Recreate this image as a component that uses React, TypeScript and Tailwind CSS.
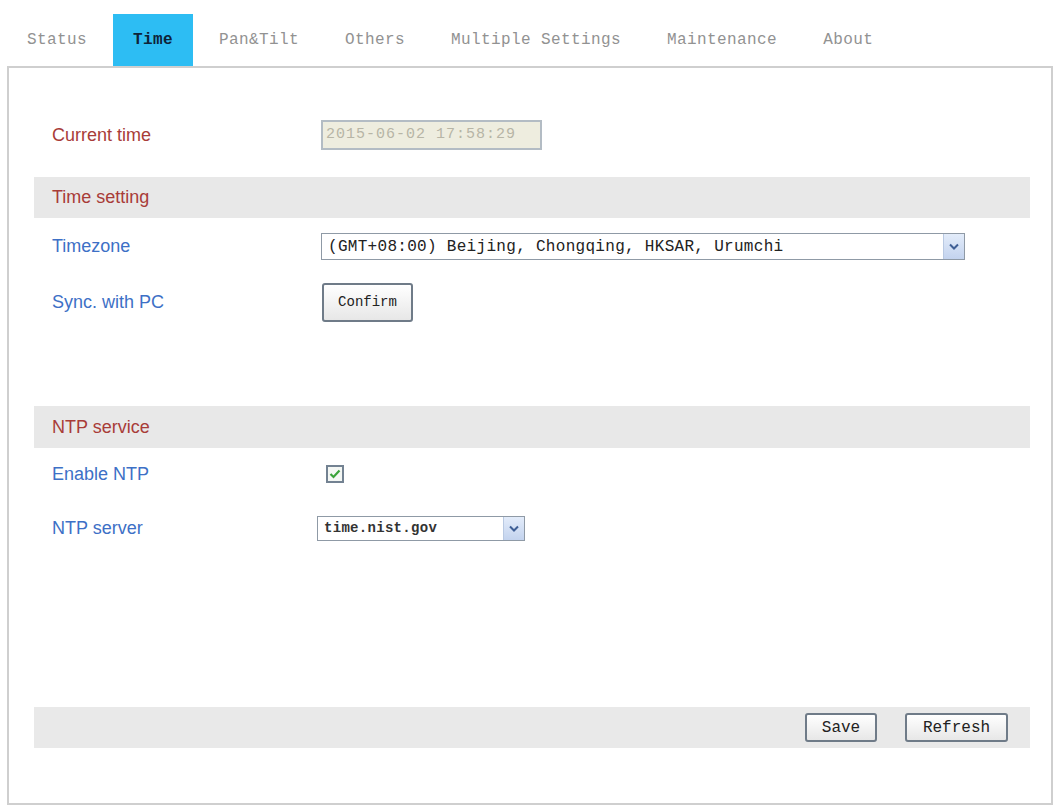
import { useState } from "react";

const TABS = ["Status", "Time", "Pan&Tilt", "Others", "Multiple Settings", "Maintenance", "About"];

function Arrow() {
  return (
    <span className="flex h-full w-[21px] items-center justify-center border-l border-[#b9c9e2] bg-linear-to-b from-[#e3ecfa] to-[#c3d3ee]">
      <svg width="10" height="7" viewBox="0 0 10 7">
        <path d="M1 1.5 L5 5.5 L9 1.5" fill="none" stroke="#3f5f95" strokeWidth="2" />
      </svg>
    </span>
  );
}

function Row({ label, children, h }: { label: string; children: React.ReactNode; h: string }) {
  return (
    <div className={`flex items-center ${h}`}>
      <div className="w-[287px] pl-[18px] text-[18px] text-[#3d70c6]">{label}</div>
      {children}
    </div>
  );
}

export default function App() {
  const [ntp, setNtp] = useState(true);

  return (
    <div className="h-[807px] w-[1056px] bg-white font-['Liberation_Sans',Arial,sans-serif]">
      {/* tabs */}
      <div className="flex h-[66px] items-end gap-[6px] pl-[7px] font-['Liberation_Mono',monospace] text-[16px] tracking-[0.4px]">
        {TABS.map((t) =>
          t === "Time" ? (
            <div key={t} className="flex h-[52px] items-center bg-[#2dbdf3] px-5 font-bold text-[#0e2338]">
              {t}
            </div>
          ) : (
            <div key={t} className="flex h-[52px] items-center px-5 text-[#929292]">
              {t}
            </div>
          )
        )}
      </div>

      <div className="mr-[3px] ml-[7px] border-2 border-[#cfcfcf] pt-[52px] pb-[55px]">
        <div className="mr-[21px] ml-[25px]">
          <div className="flex h-[30px] items-center">
            <div className="w-[287px] pl-[18px] text-[18px] text-[#a83c38]">Current time</div>
            <div className="flex h-[30px] w-[221px] items-center border-2 border-[#b3bcc4] bg-[#eeeddf] pl-[3px] font-['Liberation_Mono',monospace] text-[15px] tracking-[1px] text-[#b7b5a6]">
              2015-06-02 17:58:29
            </div>
          </div>

          <div className="mt-[27px] flex h-[41px] items-center bg-[#e8e8e8] pl-[18px] text-[18px] text-[#a83c38]">
            Time setting
          </div>

          <div className="mt-[15px]">
            <Row label="Timezone" h="h-[27px]">
              <div className="flex h-[27px] w-[644px] items-center justify-between border border-[#8f9aa6] bg-white font-['Liberation_Mono',monospace] text-[16px] tracking-[0.3px] text-[#222]">
                <span className="pl-[6px]">(GMT+08:00) Beijing, Chongqing, HKSAR, Urumchi</span>
                <Arrow />
              </div>
            </Row>
          </div>

          <div className="mt-[22px]">
            <Row label="Sync. with PC" h="h-[40px]">
              <button className="ml-[1px] h-[39px] w-[91px] rounded-[3px] border-2 border-[#6f7b88] bg-linear-to-b from-white to-[#e7e7e7] font-['Liberation_Mono',monospace] text-[14px] text-[#222]">
                Confirm
              </button>
            </Row>
          </div>

          <div className="mt-[84px] flex h-[42px] items-center bg-[#e8e8e8] pl-[18px] text-[18px] text-[#a83c38]">
            NTP service
          </div>

          <div className="mt-[14px]">
            <Row label="Enable NTP" h="h-[24px]">
              <button
                onClick={() => setNtp(!ntp)}
                className="ml-[5px] flex h-[18px] w-[18px] items-center justify-center border-2 border-[#738292] bg-[#f4f7f4]"
              >
                {ntp && (
                  <svg width="12" height="10" viewBox="0 0 12 10">
                    <path d="M1.5 5 L4.5 8 L10.5 1.5" fill="none" stroke="#3aa33a" strokeWidth="2.2" />
                  </svg>
                )}
              </button>
            </Row>
          </div>

          <div className="mt-[30px]">
            <Row label="NTP server" h="h-[25px]">
              <div className="-ml-[4px] flex h-[25px] w-[208px] items-center justify-between border border-[#8f9aa6] bg-white font-['Liberation_Mono',monospace] text-[14px] font-bold tracking-[0.3px] text-[#333]">
                <span className="pl-[6px]">time.nist.gov</span>
                <Arrow />
              </div>
            </Row>
          </div>

          <div className="mt-[166px] flex h-[41px] items-center justify-end gap-[28px] bg-[#e9e9e9] pr-[22px] font-['Liberation_Mono',monospace] text-[16px] text-[#222]">
            <button className="h-[29px] w-[72px] rounded-[3px] border-2 border-[#6f7b88] bg-linear-to-b from-white to-[#e7e7e7]">
              Save
            </button>
            <button className="h-[29px] w-[103px] rounded-[3px] border-2 border-[#6f7b88] bg-linear-to-b from-white to-[#e7e7e7]">
              Refresh
            </button>
          </div>
        </div>
      </div>
    </div>
  );
}
